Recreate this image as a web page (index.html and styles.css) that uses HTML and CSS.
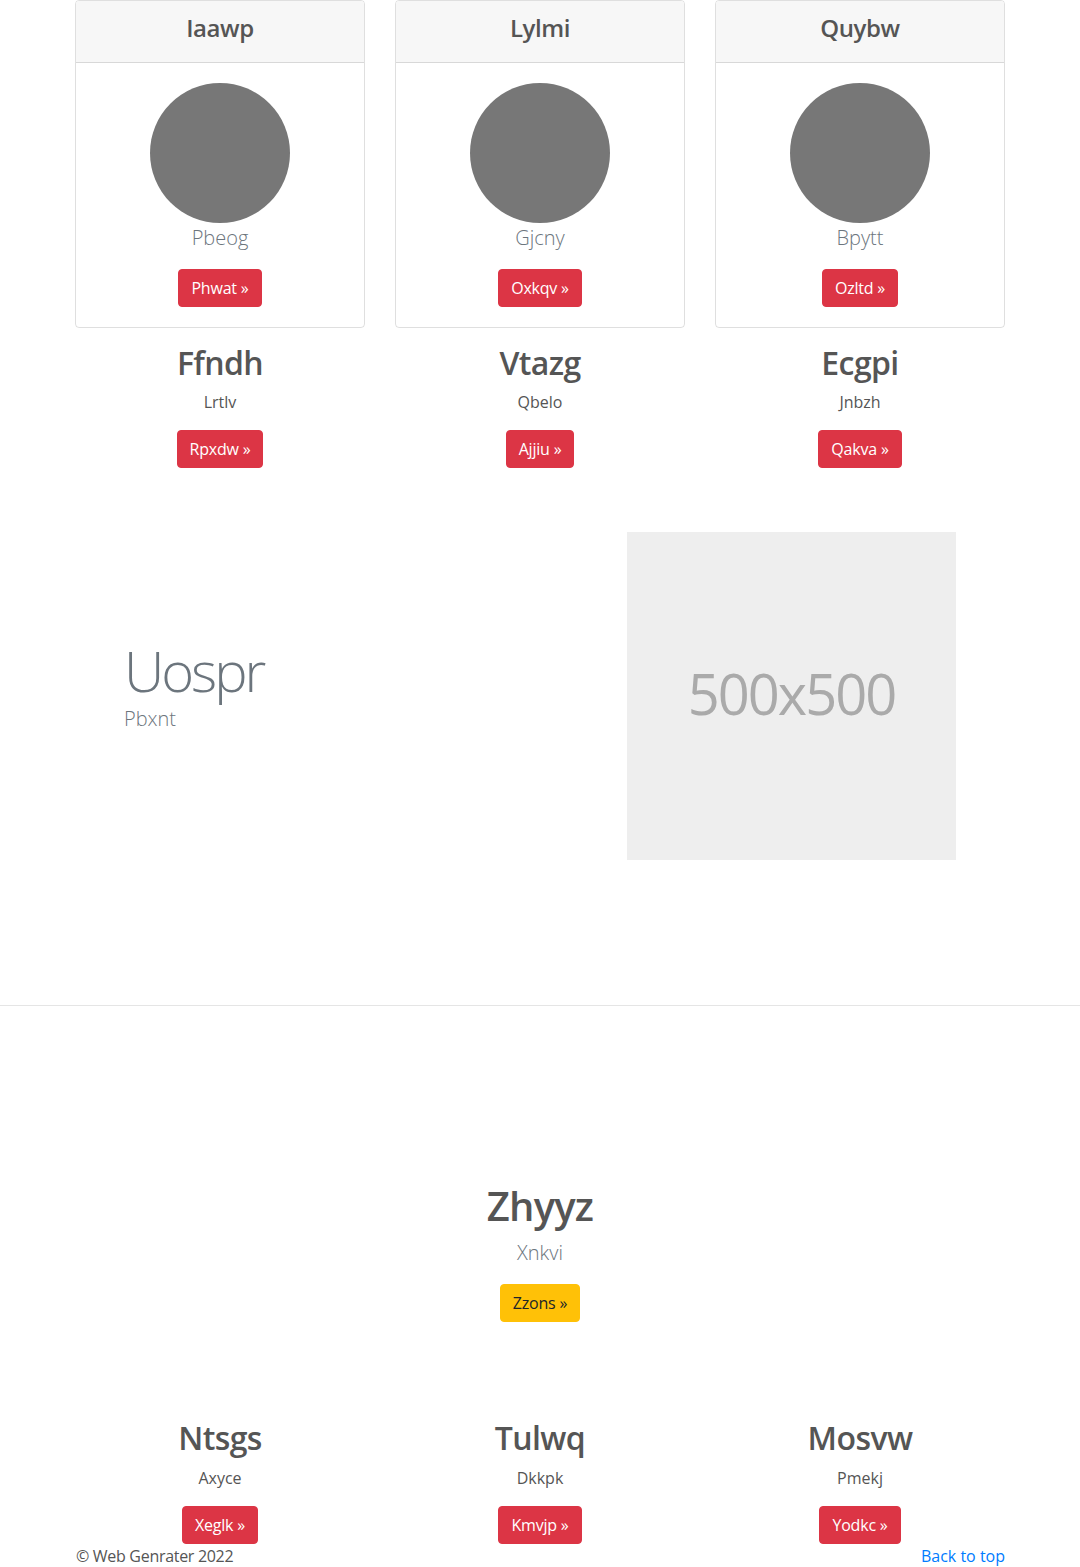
FILE: index.html
```html
<!DOCTYPE html>
<html lang="en">
<head>
<meta charset="utf-8">
<title>Page</title>
<link rel="stylesheet" href="styles.css">
</head>
<body>
<main>
  <section class="container grid3 top-row">
    <div class="col">
      <div class="card">
        <div class="card-header"><h4>Iaawp</h4></div>
        <div class="card-body">
          <div class="avatar"></div>
          <p class="lead muted">Pbeog</p>
          <a class="btn btn-danger" href="#">Phwat &raquo;</a>
        </div>
      </div>
      <h2>Ffndh</h2>
      <p>Lrtlv</p>
      <a class="btn btn-danger" href="#">Rpxdw &raquo;</a>
    </div>
    <div class="col">
      <div class="card">
        <div class="card-header"><h4>Lylmi</h4></div>
        <div class="card-body">
          <div class="avatar"></div>
          <p class="lead muted">Gjcny</p>
          <a class="btn btn-danger" href="#">Oxkqv &raquo;</a>
        </div>
      </div>
      <h2>Vtazg</h2>
      <p>Qbelo</p>
      <a class="btn btn-danger" href="#">Ajjiu &raquo;</a>
    </div>
    <div class="col">
      <div class="card">
        <div class="card-header"><h4>Quybw</h4></div>
        <div class="card-body">
          <div class="avatar"></div>
          <p class="lead muted">Bpytt</p>
          <a class="btn btn-danger" href="#">Ozltd &raquo;</a>
        </div>
      </div>
      <h2>Ecgpi</h2>
      <p>Jnbzh</p>
      <a class="btn btn-danger" href="#">Qakva &raquo;</a>
    </div>
  </section>

  <section class="container featurette">
    <div class="feat-text">
      <h1 class="display">Uospr</h1>
      <p class="lead muted">Pbxnt</p>
    </div>
    <div class="feat-media">
      <div class="placeholder">500x500</div>
    </div>
  </section>

  <hr class="divider">

  <section class="container hero">
    <h1>Zhyyz</h1>
    <p class="lead muted">Xnkvi</p>
    <a class="btn btn-warning" href="#">Zzons &raquo;</a>
  </section>

  <section class="container grid3 bottom-row">
    <div class="col">
      <h2>Ntsgs</h2>
      <p>Axyce</p>
      <a class="btn btn-danger" href="#">Xeglk &raquo;</a>
    </div>
    <div class="col">
      <h2>Tulwq</h2>
      <p>Dkkpk</p>
      <a class="btn btn-danger" href="#">Kmvjp &raquo;</a>
    </div>
    <div class="col">
      <h2>Mosvw</h2>
      <p>Pmekj</p>
      <a class="btn btn-danger" href="#">Yodkc &raquo;</a>
    </div>
  </section>
</main>
<footer class="container footer">
  <p>&copy; Web Genrater 2022</p>
  <a class="back" href="#">Back to top</a>
</footer>
</body>
</html>
```

FILE: styles.css
```css
* { box-sizing: border-box; }

html, body {
  margin: 0;
  padding: 0;
}

body {
  font-family: "Open Sans", "Noto Sans", "Liberation Sans", sans-serif;
  font-size: 16px;
  line-height: 1.5;
  color: #555;
  background: #fff;
}

h1, h2, h4, p { margin: 0; }

.container {
  width: 930px;
  margin: 0 auto;
}

.grid3 {
  display: grid;
  grid-template-columns: repeat(3, 1fr);
  column-gap: 30px;
}

.col {
  text-align: center;
}

.card {
  border: 1px solid rgba(0, 0, 0, 0.125);
  border-radius: 4px;
  margin-bottom: 16px;
  overflow: hidden;
}

.card-header {
  background: #f7f7f7;
  border-bottom: 1px solid rgba(0, 0, 0, 0.125);
  padding: 13px 20px 11px;
}

.card-header h4 {
  font-size: 24px;
  font-weight: 600;
  letter-spacing: -0.4px;
  line-height: 1.2;
  margin-bottom: 8px;
  color: #555;
}

.card-body {
  padding: 20px;
  display: flex;
  flex-direction: column;
  align-items: center;
}

.avatar {
  width: 140px;
  height: 140px;
  border-radius: 50%;
  background: #777;
}

.lead {
  font-size: 20px;
  font-weight: 300;
  line-height: 30px;
}

.muted { color: #6c757d; }

.card-body .lead { margin-bottom: 16px; padding-top: 1px; margin-top: -1px; }

.col h2 {
  font-size: 32px;
  font-weight: 600;
  letter-spacing: -0.6px;
  line-height: 1.2;
  margin-bottom: 8px;
  padding-top: 2px;
  margin-top: -2px;
  color: #555;
}

.col p:not(.lead) {
  margin-bottom: 16px;
}

.btn {
  display: inline-block;
  font-size: 16px;
  line-height: 24px;
  padding: 6px 12px;
  border: 1px solid transparent;
  border-radius: 4px;
  text-decoration: none;
  vertical-align: middle;
  letter-spacing: -0.2px;
}

.btn-danger {
  background: #dc3545;
  border-color: #dc3545;
  color: #fff;
}

.btn-warning {
  background: #ffc107;
  border-color: #ffc107;
  color: #212529;
}

.featurette {
  margin-top: 64px;
  display: grid;
  grid-template-columns: 1fr 1fr;
  column-gap: 30px;
  align-items: start;
}

.feat-text {
  padding-left: 49px;
  margin-top: 105px;
}

.display {
  font-size: 56px;
  font-weight: 300;
  letter-spacing: -3px;
  line-height: 1.2;
  color: #6c757d;
}

.feat-media {
  display: flex;
  justify-content: flex-end;
  padding-right: 49px;
}

.placeholder {
  width: 329px;
  height: 328px;
  background: #eee;
  color: #aaa;
  font-size: 56px;
  letter-spacing: -2px;
  display: flex;
  align-items: center;
  justify-content: center;
  padding-bottom: 6px;
}

.divider {
  margin: 145px 0 0;
  border: 0;
  border-top: 1px solid #e5e5e5;
  height: 0;
}

.hero {
  margin-top: 176px;
  text-align: center;
}

.hero h1 {
  font-size: 40px;
  font-weight: 600;
  letter-spacing: -0.8px;
  line-height: 1.2;
  margin-bottom: 8px;
  color: #555;
}

.hero .lead { margin-bottom: 16px; }

.bottom-row {
  margin-top: 97px;
}

.footer {
  display: flex;
  justify-content: space-between;
  line-height: 24px;
}

.footer p { margin: 0; padding-left: 1px; letter-spacing: -0.3px; }

.back {
  color: #007bff;
  text-decoration: none;
}
```
